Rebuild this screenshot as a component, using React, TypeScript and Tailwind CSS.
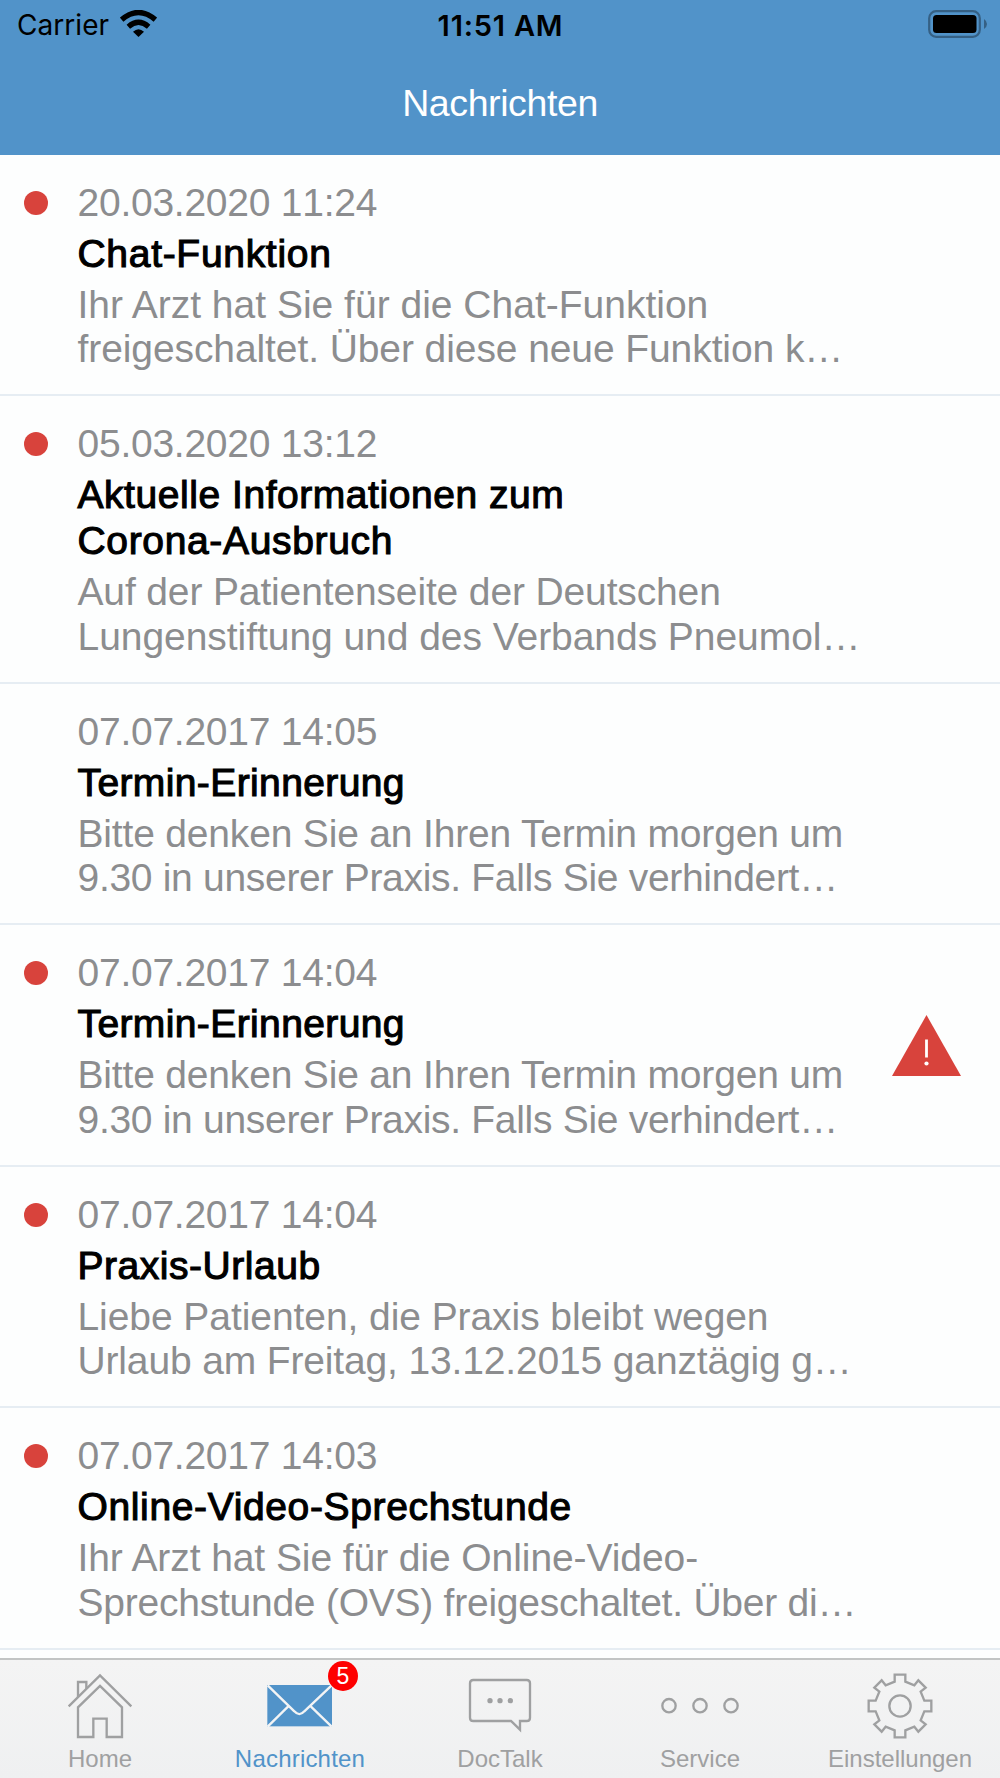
import React from "react";
import clsx from "clsx";

interface Line {
  text: string;
  tracking: string;
}

interface Message {
  date: string;
  title: Line[];
  preview: Line[];
  unread?: boolean;
  urgent?: boolean;
}

const reminderTitle: Line[] = [{ text: "Termin-Erinnerung", tracking: "tracking-[0.39px]" }];
const reminderPreview: Line[] = [
  { text: "Bitte denken Sie an Ihren Termin morgen um", tracking: "tracking-[-0.18px]" },
  { text: "9.30 in unserer Praxis. Falls Sie verhindert…", tracking: "tracking-[-0.3px]" },
];

const messages: Message[] = [
  {
    date: "20.03.2020 11:24",
    title: [{ text: "Chat-Funktion", tracking: "tracking-[0.7px]" }],
    preview: [
      { text: "Ihr Arzt hat Sie für die Chat-Funktion", tracking: "tracking-normal" },
      { text: "freigeschaltet. Über diese neue Funktion k…", tracking: "tracking-[-0.09px]" },
    ],
    unread: true,
  },
  {
    date: "05.03.2020 13:12",
    title: [
      { text: "Aktuelle Informationen zum", tracking: "tracking-[0.55px]" },
      { text: "Corona-Ausbruch", tracking: "tracking-[0.66px]" },
    ],
    preview: [
      { text: "Auf der Patientenseite der Deutschen", tracking: "tracking-[-0.14px]" },
      { text: "Lungenstiftung und des Verbands Pneumol…", tracking: "tracking-[-0.05px]" },
    ],
    unread: true,
  },
  {
    date: "07.07.2017 14:05",
    title: reminderTitle,
    preview: reminderPreview,
  },
  {
    date: "07.07.2017 14:04",
    title: reminderTitle,
    preview: reminderPreview,
    unread: true,
    urgent: true,
  },
  {
    date: "07.07.2017 14:04",
    title: [{ text: "Praxis-Urlaub", tracking: "tracking-[0.54px]" }],
    preview: [
      { text: "Liebe Patienten, die Praxis bleibt wegen", tracking: "tracking-[-0.07px]" },
      { text: "Urlaub am Freitag, 13.12.2015 ganztägig g…", tracking: "tracking-[-0.15px]" },
    ],
    unread: true,
  },
  {
    date: "07.07.2017 14:03",
    title: [{ text: "Online-Video-Sprechstunde", tracking: "tracking-[0.64px]" }],
    preview: [
      { text: "Ihr Arzt hat Sie für die Online-Video-", tracking: "tracking-[-0.08px]" },
      { text: "Sprechstunde (OVS) freigeschaltet. Über di…", tracking: "tracking-[-0.24px]" },
    ],
    unread: true,
  },
];

function StatusBar() {
  return (
    <div className="grid h-[51px] grid-cols-3 items-center pr-[13px] pl-[17px] font-['Inter',sans-serif] leading-[51px] text-black">
      <div className="flex items-center">
        <span className="text-[28px] tracking-[0.05px]">Carrier</span>
        <svg className="mb-[4px] ml-[11px] h-[27px] w-[37px]" viewBox="0 0 111 81" fill="none" stroke="#000">
          <path d="M5 29 Q55.5 -14 106 29" strokeWidth="16" />
          <path d="M25 50 Q55.5 24 86 50" strokeWidth="16" />
          <path d="M39 65 Q55.5 50 72 65 L55.5 81 Z" fill="#000" stroke="none" />
        </svg>
      </div>
      <span className="pr-[3px] text-center text-[29px] font-semibold tracking-[0.8px] whitespace-nowrap">
        11:51 AM
      </span>
      <svg className="mb-[3px] h-[28px] w-[59px] justify-self-end" viewBox="0 0 59 28">
        <rect x="1.2" y="1.2" width="50.6" height="25.6" rx="7" fill="none" stroke="#356084" strokeWidth="2.2" />
        <rect x="5" y="5" width="43.5" height="18" rx="3.5" fill="#000" />
        <path d="M56 9 Q59 11 59 14 Q59 17 56 19 Z" fill="#356084" />
      </svg>
    </div>
  );
}

function MessageRow({ message }: { message: Message }) {
  return (
    <li
      className={clsx(
        "flex border-b-2 border-[#e6edf3] pt-[26px]",
        message.title.length > 1 ? "h-[287.5px]" : "h-[241.5px]"
      )}
    >
      <div className="flex w-[77px] shrink-0 pt-[10px] pl-6">
        {message.unread && <span className="size-6 rounded-full bg-[#d8433c]" />}
      </div>
      <div className="w-[800px] pl-[0.5px] text-[39px] whitespace-nowrap">
        <p className="leading-[44px] tracking-[-0.25px] text-[#8c8d8f] [font-kerning:none]">{message.date}</p>
        <h2 className="mt-[6px] leading-[46px] text-black [-webkit-text-stroke:1.1px_#000]">
          {message.title.map((line) => (
            <span key={line.text} className={clsx("block", line.tracking)}>
              {line.text}
            </span>
          ))}
        </h2>
        <p className="mt-[6px] leading-[44.5px] text-[#8c8d8f]">
          {message.preview.map((line) => (
            <span key={line.text} className={clsx("block", line.tracking)}>
              {line.text}
            </span>
          ))}
        </p>
      </div>
      {message.urgent && (
        <svg className="mt-[63.5px] ml-[15px] h-[61px] w-[69px]" viewBox="0 0 69 61">
          <path d="M34.5 0 L69 61 H0 Z" fill="#d8433c" />
          <path d="M34.5 24.5 V42.5" stroke="#fff" strokeWidth="2.8" />
          <circle cx="34.5" cy="48.5" r="2.1" fill="#fff" />
        </svg>
      )}
    </li>
  );
}

const gearPath =
  "M-16 -73 L-16 -94 H16 V-73 L43 -62 L55 -77 L77 -55 L62 -43 L73 -16 H94 V16 H73 L62 43 L77 55 L55 77 L43 62 L16 73 V94 H-16 V73 L-43 62 L-55 77 L-77 55 L-62 43 L-73 16 H-94 V-16 H-73 L-62 -43 L-77 -55 L-55 -77 L-43 -62 Z";

const tabs = [
  {
    label: "Home",
    icon: (
      <g>
        <path d="M-94 1 L0 -92 L94 1" />
        <path d="M-66 -27 V-72 H-41 V-52" />
        <path d="M-66 93 V4 L0 -60 L66 4 V93 H20 V38 H-20 V93 Z" />
      </g>
    ),
  },
  {
    label: "Nachrichten",
    badge: 5,
    active: true,
    icon: (
      <g>
        <rect x="-98" y="-63" width="194" height="124" fill="#5193c9" stroke="none" />
        <path d="M-97 -62 L-17 16 Q-2 33 13 16 L95 -62 M-97 62 L-36 2 M95 62 L33 2" stroke="#f3f4f5" />
      </g>
    ),
  },
  {
    label: "DocTalk",
    icon: (
      <g>
        <path d="M-80 -78 H80 Q90 -78 90 -68 V35 Q90 45 80 45 H60 V71 L33 45 H-80 Q-90 45 -90 35 V-68 Q-90 -78 -80 -78 Z" />
        <g fill="#9fa0a1" stroke="none">
          <circle cx="-30" cy="-16" r="8" />
          <circle cx="0" cy="-16" r="8" />
          <circle cx="31" cy="-16" r="8" />
        </g>
      </g>
    ),
  },
  {
    label: "Service",
    icon: (
      <g>
        <circle cx="-93" cy="-1" r="20" />
        <circle cx="0" cy="-1" r="20" />
        <circle cx="93" cy="-1" r="20" />
      </g>
    ),
  },
  {
    label: "Einstellungen",
    icon: (
      <g>
        <path d={gearPath} />
        <circle cx="0" cy="0" r="32" />
      </g>
    ),
  },
];

function TabBar() {
  return (
    <nav className="grid h-[120px] shrink-0 grid-cols-5 border-t-2 border-[#c2c4c4] bg-linear-to-b from-[#f4f4f4] to-[#eff0f1]">
      {tabs.map((tab) => (
        <div key={tab.label} className="relative flex flex-col items-center pt-[13px]">
          <svg
            className="h-[66px] w-[80px]"
            viewBox="-120 -99 240 198"
            fill="none"
            stroke="#9fa0a1"
            strokeWidth="7"
          >
            {tab.icon}
          </svg>
          {tab.badge && (
            <span className="absolute top-px left-[128px] size-[30px] rounded-full bg-[#fe0000] text-center text-[23px] leading-[30px] text-white">
              {tab.badge}
            </span>
          )}
          <span
            className={clsx(
              "mt-[6px] text-[24px] leading-[28px]",
              tab.active ? "tracking-[0.2px] text-[#5193c9]" : "text-[#9fa0a1]"
            )}
          >
            {tab.label}
          </span>
        </div>
      ))}
    </nav>
  );
}

export default function App() {
  return (
    <div className="flex h-[1778px] w-[1000px] flex-col overflow-hidden bg-[#fdfefe] font-['Liberation_Sans',sans-serif]">
      <header className="h-[154.5px] shrink-0 bg-[#5193c9]">
        <StatusBar />
        <h1 className="mt-[30px] text-center text-[37.5px] leading-[44px] tracking-[-0.4px] text-white">
          Nachrichten
        </h1>
      </header>
      <ul className="min-h-0 flex-1 overflow-hidden">
        {messages.map((message, index) => (
          <MessageRow key={index} message={message} />
        ))}
      </ul>
      <TabBar />
    </div>
  );
}
